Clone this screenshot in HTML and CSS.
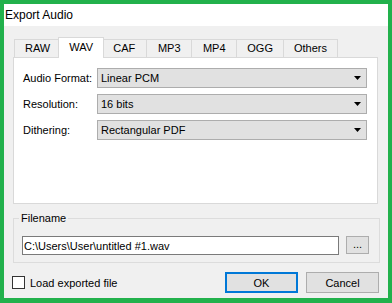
FILE: index.html
```html
<!DOCTYPE html>
<html>
<head>
    <title>Export Audio</title>
    <link rel="stylesheet" href="styles.css">
</head>
<body>
    <div class="window">
        <div class="titlebar">Export Audio</div>
        <div class="client">
            <div class="tabs">
                <div class="tab">RAW</div>
                <div class="tab active">WAV</div>
                <div class="tab">CAF</div>
                <div class="tab">MP3</div>
                <div class="tab">MP4</div>
                <div class="tab">OGG</div>
                <div class="tab">Others</div>
            </div>
            <div class="panel">
                <span class="label">Audio Format:</span>
                <div class="combo">
                    <span>Linear PCM</span>
                    <svg width="7" height="4" viewBox="0 0 7 4"><path d="M0 0H7L3.5 4Z" fill="#000"/></svg>
                </div>
                <span class="label">Resolution:</span>
                <div class="combo">
                    <span>16 bits</span>
                    <svg width="7" height="4" viewBox="0 0 7 4"><path d="M0 0H7L3.5 4Z" fill="#000"/></svg>
                </div>
                <span class="label">Dithering:</span>
                <div class="combo">
                    <span>Rectangular PDF</span>
                    <svg width="7" height="4" viewBox="0 0 7 4"><path d="M0 0H7L3.5 4Z" fill="#000"/></svg>
                </div>
            </div>
            <fieldset class="group">
                <legend>Filename</legend>
                <div class="file-row">
                    <input class="path" type="text" value="C:\Users\User\untitled #1.wav">
                    <button class="browse">...</button>
                </div>
            </fieldset>
            <div class="footer">
                <label class="check"><span class="box"></span>Load exported file</label>
                <button class="btn default">OK</button>
                <button class="btn">Cancel</button>
            </div>
        </div>
    </div>
</body>
</html>
```

FILE: styles.css
```css
body {
    margin: 0;
    font: 11px "Liberation Sans", Arial, sans-serif;
    color: #000;
}
.window {
    width: 392px;
    height: 303px;
    box-sizing: border-box;
    border: 4px solid #22b14c;
    border-bottom-width: 5px;
    display: flex;
    flex-direction: column;
}
.titlebar {
    height: 22px;
    line-height: 22px;
    padding-left: 1px;
    background: #fff;
    font-size: 12px;
}
.client {
    flex: 1;
    background: #f0f0f0;
    padding: 11px 8px 0 9px;
    display: flex;
    flex-direction: column;
}
.tabs {
    display: flex;
    align-items: flex-end;
    height: 20px;
    padding-left: 2px;
}
.tab {
    box-sizing: border-box;
    min-width: 46px;
    height: 18px;
    line-height: 17px;
    padding: 0 10px;
    text-align: center;
    border: 1px solid #d9d9d9;
    border-bottom: 0;
    margin-left: -1px;
    background: #f0f0f0;
}
.tab.active {
    position: relative;
    z-index: 1;
    height: 21px;
    line-height: 19px;
    margin: 0 -2px -1px -3px;
    background: #fff;
}
.panel {
    box-sizing: border-box;
    height: 147px;
    margin-right: 2px;
    border: 1px solid #d9d9d9;
    background: #fff;
    padding: 10px 10px 0 9px;
    display: grid;
    grid-template-columns: 74px 1fr;
    grid-auto-rows: 20px;
    row-gap: 6px;
    align-content: start;
    align-items: center;
}
.combo {
    box-sizing: border-box;
    height: 20px;
    border: 1px solid #adadad;
    background: #e1e1e1;
    display: flex;
    align-items: center;
    justify-content: space-between;
    padding: 0 5px 0 3px;
}
.group {
    margin: 7px 0 0 0;
    padding: 10px 10px 7px 8px;
    border: 1px solid #dcdcdc;
    min-width: 0;
}
.group legend {
    padding: 0 2px;
    margin-left: -3px;
    line-height: 15px;
}
.file-row {
    display: flex;
    gap: 7px;
    align-items: flex-start;
}
.path {
    flex: 1;
    min-width: 0;
    box-sizing: border-box;
    height: 19px;
    margin: 0;
    border: 1px solid #7a7a7a;
    padding: 0 1px;
    font: inherit;
    color: #000;
    background: #fff;
}
.browse {
    box-sizing: border-box;
    width: 23px;
    height: 18px;
    margin: 0;
    padding: 0 0 3px;
    border: 1px solid #adadad;
    background: #e1e1e1;
    font: inherit;
    color: #000;
}
.footer {
    margin-top: 9px;
    padding-right: 1px;
    display: flex;
    align-items: center;
    gap: 8px;
}
.check {
    flex: 1;
    display: flex;
    align-items: center;
    gap: 5px;
}
.box {
    box-sizing: border-box;
    width: 13px;
    height: 13px;
    margin-left: -1px;
    border: 1px solid #333;
    background: #fff;
}
.btn {
    box-sizing: border-box;
    width: 73px;
    height: 21px;
    margin: 0;
    padding: 0;
    border: 1px solid #adadad;
    background: #e1e1e1;
    font: inherit;
    color: #000;
}
.btn.default {
    border: 2px solid #0078d7;
}
```
